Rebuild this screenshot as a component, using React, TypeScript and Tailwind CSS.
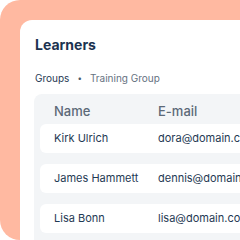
import React from "react";

const rows = [
  { name: "Kirk Ulrich", email: "dora@domain.com" },
  { name: "James Hammett", email: "dennis@domain.com" },
  { name: "Lisa Bonn", email: "lisa@domain.com" },
];

export default function App() {
  return (
    <div className="w-[240px] h-[240px] bg-white overflow-hidden" style={{ fontFamily: "Inter, 'Noto Sans', sans-serif" }}>
      <div className="w-[260px] h-[240px] rounded-[20px] bg-[#ffb9a1] pt-[20px] pl-[20px]">
        <div className="w-[240px] h-[230px] bg-white rounded-tl-[12px] pt-[15px] pl-[14px] overflow-hidden">
          <div className="pl-[1px] text-[14px] leading-[20px] font-bold text-[#1b3250]">Learners</div>
          <div className="pl-[1px] mt-[16px] flex items-center text-[10px] leading-[14px]">
            <span className="text-[#1f3a54]">Groups</span>
            <span className="mx-[8px] text-[#4b5a6b] text-[8px]">•</span>
            <span className="text-[#66727f]">Training Group</span>
          </div>
          <div className="mt-[9px] w-[240px] h-[200px] bg-[#f3f5f7] rounded-[8px] px-[6px]">
            <div className="h-[30px] pt-[6px] flex items-center text-[13px] font-medium text-[#5c6977]">
              <div className="w-[118px] shrink-0 pl-[14px]">Name</div>
              <div>E-mail</div>
            </div>
            {rows.map((r) => (
              <div key={r.name} className="h-[29px] mb-[11px] bg-white rounded-[6px] flex items-center text-[11px] text-[#1f3a54] whitespace-nowrap">
                <div className="w-[118px] shrink-0 pl-[14px]">{r.name}</div>
                <div>{r.email}</div>
              </div>
            ))}
          </div>
        </div>
      </div>
    </div>
  );
}
